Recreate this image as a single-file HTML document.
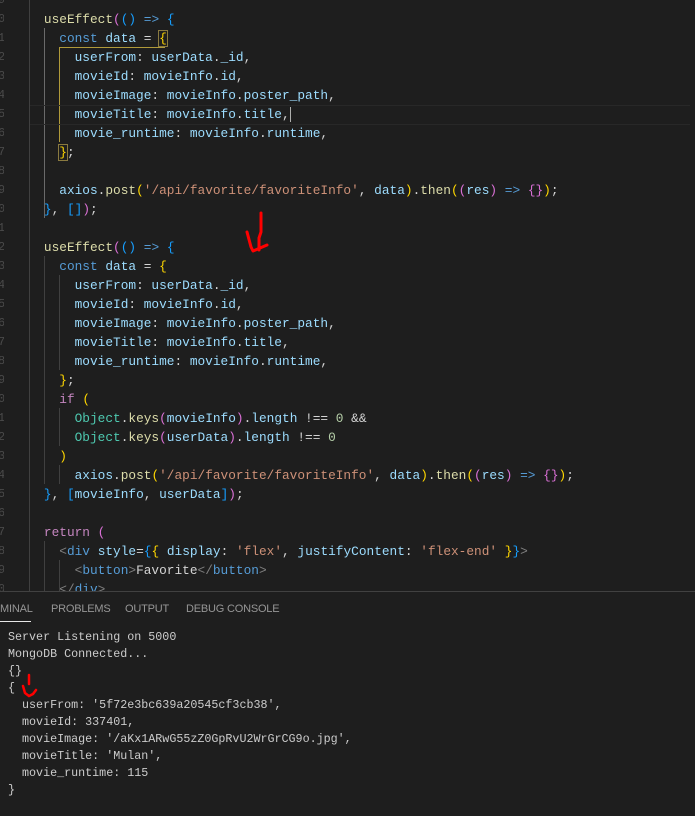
<!DOCTYPE html>
<html><head><style>
html,body{margin:0;padding:0;background:#1e1e1e;width:695px;height:816px;overflow:hidden;position:relative}
.code{position:absolute;left:13.2px;top:-9.5px;margin:0;font:12.8px/19px "Liberation Mono",monospace;color:#d4d4d4;white-space:pre}
.l{height:19px}
.v{color:#9cdcfe}.f{color:#dcdcaa}.k{color:#569cd6}.c{color:#c586c0}.s{color:#ce9178}.n{color:#b5cea8}.o{color:#4ec9b0}
.b1{color:#ffd700}.b2{color:#da70d6}.b3{color:#179fff}.t{color:#808080}.g{color:#d4d4d4}
.guide{position:absolute;width:1px;background:#404040}
.term{position:absolute;left:0;top:591px;width:695px;height:225px;background:#1e1e1e;border-top:1px solid #414141}
.tabs{position:absolute;top:11px;font:11px "Liberation Sans",sans-serif;color:#969696;letter-spacing:-0.2px}
.tout{position:absolute;left:8px;top:37px;margin:0;font:11.7px/17px "Liberation Mono",monospace;color:#cccccc;white-space:pre}
.gn{position:absolute;left:-2px;width:6px;overflow:hidden;font:12px/19px "Liberation Mono",monospace;color:#4a4a4a;white-space:pre}
</style></head><body>
<div class="gn" style="top:-9.5px">9<br>0<br>1<br>2<br>3<br>4<br>5<br>6<br>7<br>8<br>9<br>0<br>1<br>2<br>3<br>4<br>5<br>6<br>7<br>8<br>9<br>0<br>1<br>2<br>3<br>4<br>5<br>6<br>7<br>8<br>9<br>0<br>1</div>
<div class="guide" style="left:29px;top:0;height:591px"></div>
<div class="guide" style="left:44px;top:28px;height:190px;background:#6a6a6a"></div>
<div class="guide" style="left:44px;top:256px;height:228px"></div>
<div class="guide" style="left:59px;top:275px;height:95px"></div>
<div class="guide" style="left:59px;top:408px;height:38px"></div>
<div class="guide" style="left:59px;top:465px;height:19px"></div>
<div class="guide" style="left:44px;top:541px;height:50px"></div>
<div class="guide" style="left:59px;top:560px;height:31px"></div>
<div style="position:absolute;left:59px;top:47px;width:1px;height:95px;background:#b09a3a"></div>
<div style="position:absolute;left:59px;top:47px;width:106px;height:1px;background:#b09a3a"></div>
<div style="position:absolute;left:30px;top:105px;width:660px;height:18px;border-top:1px solid #282828;border-bottom:1px solid #282828"></div>
<pre class="code"><div class="l"> </div><div class="l">    <span class="f">useEffect</span><span class="b2">(</span><span class="b3">()</span> <span class="k">=&gt;</span> <span class="b3">{</span></div><div class="l">      <span class="k">const</span> <span class="v">data</span> = <span class="b1" style="outline:1px solid #8a7a40">{</span></div><div class="l">        <span class="v">userFrom</span>: <span class="v">userData</span>.<span class="v">_id</span>,</div><div class="l">        <span class="v">movieId</span>: <span class="v">movieInfo</span>.<span class="v">id</span>,</div><div class="l">        <span class="v">movieImage</span>: <span class="v">movieInfo</span>.<span class="v">poster_path</span>,</div><div class="l">        <span class="v">movieTitle</span>: <span class="v">movieInfo</span>.<span class="v">title</span>,<span style="border-left:1px solid #aeafad"></span></div><div class="l">        <span class="v">movie_runtime</span>: <span class="v">movieInfo</span>.<span class="v">runtime</span>,</div><div class="l">      <span class="b1" style="outline:1px solid #8a7a40">}</span>;</div><div class="l"> </div><div class="l">      <span class="v">axios</span>.<span class="f">post</span><span class="b1">(</span><span class="s">'/api/favorite/favoriteInfo'</span>, <span class="v">data</span><span class="b1">)</span>.<span class="f">then</span><span class="b1">(</span><span class="b2">(</span><span class="v">res</span><span class="b2">)</span> <span class="k">=&gt;</span> <span class="b2">{}</span><span class="b1">)</span>;</div><div class="l">    <span class="b3">}</span>, <span class="b3">[]</span><span class="b2">)</span>;</div><div class="l"> </div><div class="l">    <span class="f">useEffect</span><span class="b2">(</span><span class="b3">()</span> <span class="k">=&gt;</span> <span class="b3">{</span></div><div class="l">      <span class="k">const</span> <span class="v">data</span> = <span class="b1">{</span></div><div class="l">        <span class="v">userFrom</span>: <span class="v">userData</span>.<span class="v">_id</span>,</div><div class="l">        <span class="v">movieId</span>: <span class="v">movieInfo</span>.<span class="v">id</span>,</div><div class="l">        <span class="v">movieImage</span>: <span class="v">movieInfo</span>.<span class="v">poster_path</span>,</div><div class="l">        <span class="v">movieTitle</span>: <span class="v">movieInfo</span>.<span class="v">title</span>,</div><div class="l">        <span class="v">movie_runtime</span>: <span class="v">movieInfo</span>.<span class="v">runtime</span>,</div><div class="l">      <span class="b1">}</span>;</div><div class="l">      <span class="c">if</span> <span class="b1">(</span></div><div class="l">        <span class="o">Object</span>.<span class="f">keys</span><span class="b2">(</span><span class="v">movieInfo</span><span class="b2">)</span>.<span class="v">length</span> !== <span class="n">0</span> &amp;&amp;</div><div class="l">        <span class="o">Object</span>.<span class="f">keys</span><span class="b2">(</span><span class="v">userData</span><span class="b2">)</span>.<span class="v">length</span> !== <span class="n">0</span></div><div class="l">      <span class="b1">)</span></div><div class="l">        <span class="v">axios</span>.<span class="f">post</span><span class="b1">(</span><span class="s">'/api/favorite/favoriteInfo'</span>, <span class="v">data</span><span class="b1">)</span>.<span class="f">then</span><span class="b1">(</span><span class="b2">(</span><span class="v">res</span><span class="b2">)</span> <span class="k">=&gt;</span> <span class="b2">{}</span><span class="b1">)</span>;</div><div class="l">    <span class="b3">}</span>, <span class="b3">[</span><span class="v">movieInfo</span>, <span class="v">userData</span><span class="b3">]</span><span class="b2">)</span>;</div><div class="l"> </div><div class="l">    <span class="c">return</span> <span class="b2">(</span></div><div class="l">      <span class="t">&lt;</span><span class="k">div</span> <span class="v">style</span>=<span class="b3">{</span><span class="b1">{</span> <span class="v">display</span>: <span class="s">'flex'</span>, <span class="v">justifyContent</span>: <span class="s">'flex-end'</span> <span class="b1">}</span><span class="b3">}</span><span class="t">&gt;</span></div><div class="l">        <span class="t">&lt;</span><span class="k">button</span><span class="t">&gt;</span>Favorite<span class="t">&lt;/</span><span class="k">button</span><span class="t">&gt;</span></div><div class="l">      <span class="t">&lt;/</span><span class="k">div</span><span class="t">&gt;</span></div></pre>
<svg style="position:absolute;left:245px;top:210px" width="30" height="50"><path d="M16 3 L16 22 L14 28 L14 40 M2 22 L6 37 L8 41 L22 35" stroke="#f00" stroke-width="3" fill="none" stroke-linecap="round" stroke-linejoin="round"/></svg>
<div class="term">
<div class="tabs" style="left:0">MINAL</div>
<div style="position:absolute;left:0;top:29px;width:31px;height:1px;background:#e7e7e7"></div>
<div class="tabs" style="left:51px">PROBLEMS</div>
<div class="tabs" style="left:125px">OUTPUT</div>
<div class="tabs" style="left:186px">DEBUG CONSOLE</div>
<pre class="tout">Server Listening on 5000
MongoDB Connected...
{}
{
  userFrom: '5f72e3bc639a20545cf3cb38',
  movieId: 337401,
  movieImage: '/aKx1ARwG55zZ0GpRvU2WrGrCG9o.jpg',
  movieTitle: 'Mulan',
  movie_runtime: 115
}</pre>
</div>
<svg style="position:absolute;left:18px;top:672px" width="30" height="30"><path d="M11 3 L11 12 M5 14 L7 21 L11 24 L15 22 L18 18" stroke="#f00" stroke-width="2.5" fill="none" stroke-linecap="round"/></svg>
</body></html>
